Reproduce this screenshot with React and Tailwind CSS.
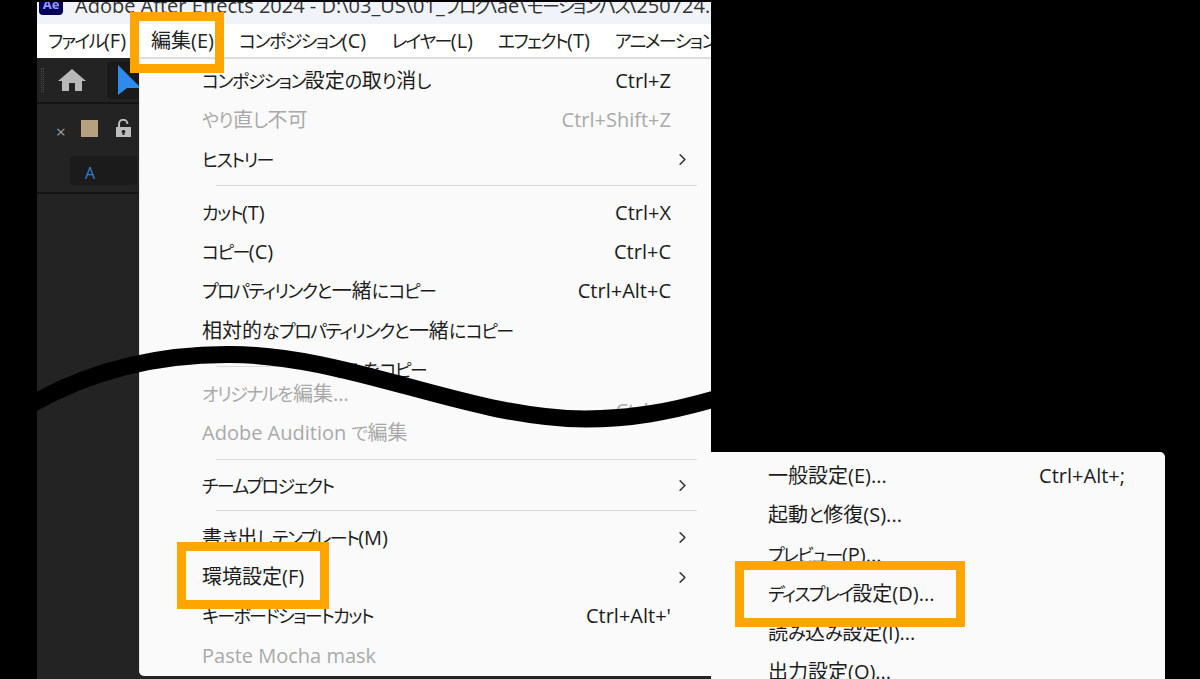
import React from 'react';
import { ChevronRight } from 'lucide-react';

// katakana / hiragana run narrower than kanji in the reference font
const K = ({ children }) => <span className="text-[18px] tracking-[-1.6px]">{children}</span>;
const H = ({ children }) => <span className="text-[18px] tracking-[-0.5px]">{children}</span>;

const Row = ({ label, shortcut, disabled, arrow, labelClass = '', shortcutClass = '' }) => (
    <div className={`flex h-[39.25px] items-center justify-between ${arrow ? 'pr-[19px]' : 'pr-[40px]'} ${disabled ? 'text-[#a9a9a9]' : 'text-[#1c1c1c]'}`}>
        <span className={`whitespace-nowrap ${labelClass}`}>{label}</span>
        {shortcut && <span className={`whitespace-nowrap ${shortcutClass}`}>{shortcut}</span>}
        {arrow && <ChevronRight size={19} strokeWidth={2} className="text-[#333333]" />}
    </div>
);

const Sep = ({ top }) => (
    <div className={`h-[13px] ${top}`}>
        <div className="ml-[14px] mr-[14px] h-[1px] bg-[#dadada]" />
    </div>
);

const Highlight = ({ className }) => (
    <div className={`absolute border-[9px] border-[#ffa500] ${className}`} />
);

const App = () => {
    return (
        <div className="relative flex h-[679px] w-[1200px] overflow-hidden bg-black pl-[37px] pt-[2px] font-['Open_Sans','Noto_Sans_CJK_JP',sans-serif] text-[20px] leading-[26px] [font-feature-settings:'palt']">
            {/* app window */}
            <div className="relative flex w-[674px] flex-col overflow-hidden">
                {/* title bar */}
                <div className="flex h-[22px] shrink-0 items-start gap-[12px] overflow-hidden bg-[#f0f3f9] pl-[2px]">
                    <div className="-mt-[9px] flex h-[22px] w-[24px] shrink-0 items-center justify-center rounded-[4px] bg-[#00005b] text-[13px] font-bold text-[#9999ff]">Ae</div>
                    <span className="-mt-[9px] whitespace-nowrap text-[#333333]">
                        Adobe After Effects 2024 - D:\03_US\01_<K>ブログ</K>\ae\<K>モーションパス</K>\250724.aep
                    </span>
                </div>
                {/* menu bar */}
                <div className="flex h-[34px] shrink-0 items-center gap-[25px] overflow-hidden bg-white pl-[11px] text-[#222222]">
                    <span className="whitespace-nowrap"><K>ファイル</K>(F)</span>
                    <span className="whitespace-nowrap">編集(E)</span>
                    <span className="whitespace-nowrap"><K>コンポジション</K>(C)</span>
                    <span className="whitespace-nowrap"><K>レイヤー</K>(L)</span>
                    <span className="whitespace-nowrap"><K>エフェクト</K>(T)</span>
                    <span className="whitespace-nowrap"><K>アニメーション</K>(A)</span>
                </div>
                {/* dark panels */}
                <div className="flex flex-1 flex-col bg-[#232323]">
                    <div className="flex h-[46px] items-center border-b-2 border-[#141414] pl-[4px]">
                        <div className="h-[24px] w-[3px] border-x border-dotted border-[#4a4a4a]" />
                        <svg width="28" height="22" viewBox="0 0 28 22" className="ml-[14px]">
                            <path d="M14 0 L28 12 L24 12 L24 22 L17 22 L17 14 L11 14 L11 22 L4 22 L4 12 L0 12 Z" fill="#b8b8b8" />
                        </svg>
                        <div className="ml-[21px] flex h-[38px] w-[40px] items-center rounded-[4px] bg-[#1a1a1a] pl-[11px]">
                            <svg width="24" height="30" viewBox="0 0 24 30">
                                <path d="M0 0 L23 23 L9 23 L0 30 Z" fill="#2d8ceb" />
                            </svg>
                        </div>
                    </div>
                    <div className="flex h-[48px] items-center pl-[19px]">
                        <span className="pt-[6px] text-[17px] leading-none text-[#a0a0a0]">×</span>
                        <div className="ml-[15px] h-[17px] w-[17px] bg-[#b5a07f]" />
                        <svg width="15" height="18" viewBox="0 0 15 18" className="ml-[18px]">
                            <path d="M3 9 V5 a4.2 4.2 0 0 1 8.4 0" fill="none" stroke="#bdbdbd" strokeWidth="2" />
                            <path d="M0 8 H15 V18 H0 Z M7.5 11 a1.6 1.6 0 0 0 -1 3 V16 H8.5 V14 a1.6 1.6 0 0 0 -1 -3 Z" fill="#bdbdbd" fillRule="evenodd" />
                        </svg>
                    </div>
                    <div className="h-[42px] border-b-2 border-[#141414] pl-[33px] pt-[4px]">
                        <div className="flex h-[29px] w-[67px] items-center rounded-[3px] bg-[#1b1b1b] pl-[15px] pt-[4px] text-[16px] text-[#2f80d0]">A</div>
                    </div>
                </div>

                {/* edit menu */}
                <div className="absolute left-[102px] top-[55px] h-[619px] w-[572px] rounded-bl-[5px] border-l border-[#e8e8e8] bg-[#fafafa] pt-[4.4px] pl-[62px] [&>*]:-ml-[62px] [&>*]:pl-[62px]">
                    <div className="absolute left-0 top-0 !ml-0 h-[2px] w-full bg-[#dddddd] !pl-0" />
                    <Row label={<><K>コンポジション</K>設定<H>の</H>取<H>り</H>消<H>し</H></>} shortcut="Ctrl+Z" />
                    <Row label={<><H>やり</H>直<H>し</H>不可</>} shortcut="Ctrl+Shift+Z" disabled />
                    <Row label={<K>ヒストリー</K>} arrow />
                    <Sep top="pt-[6px] h-[14px]" />
                    <Row label={<><K>カット</K>(T)</>} shortcut="Ctrl+X" />
                    <Row label={<><K>コピー</K>(C)</>} shortcut="Ctrl+C" />
                    <Row label={<><K>プロパティリンク</K><H>と</H>一緒<H>に</H><K>コピー</K></>} shortcut="Ctrl+Alt+C" />
                    <Row label={<>相対的<H>な</H><K>プロパティリンク</K><H>と</H>一緒<H>に</H><K>コピー</K></>} />
                    <Row label={<><K>エクスプレッション</K><H>のみを</H><K>コピー</K></>} labelClass="[clip-path:inset(0_0_0_133px)]" />
                    {/* the lower half of the torn screenshot starts here */}
                    <div className="-mt-[23.3px] h-[1px] w-[191px] !pl-0">
                        <div className="ml-[76px] h-[1px] w-[177px] bg-[#dadada]" />
                    </div>
                    <div className="h-[7.4px]" />
                    <Row label={<><K>オリジナル</K><H>を</H>編集...</>} shortcut="Ctrl+E" disabled shortcutClass="mt-[34px]" />
                    <Row label={<>Adobe Audition <H>で</H>編集</>} disabled />
                    <Sep top="pt-[6px]" />
                    <Row label={<K>チームプロジェクト</K>} arrow />
                    <Sep top="pt-[5px]" />
                    <Row label={<>書<H>き</H>出<H>し</H><K>テンプレート</K>(M)</>} arrow />
                    <Row label="環境設定(F)" arrow />
                    <Row label={<K>キーボードショートカット</K>} shortcut="Ctrl+Alt+'" />
                    <Row label="Paste Mocha mask" disabled />
                </div>

                {/* tear across the window */}
                <svg width="674" height="100" viewBox="37 340 674 100" className="absolute left-0 top-[338px]">
                    <path d="M30 405 C 100 365, 170 354, 231 354.5 C 350 355, 470 419, 585 419 C 630 419, 670 412, 718 398" fill="none" stroke="#000000" strokeWidth="17" />
                </svg>
            </div>

            {/* preferences submenu */}
            <div className="absolute left-[711px] top-[452px] w-[454px] rounded-tr-[5px] bg-[#fafafa] pt-[4.4px] pl-[57px]">
                <Row label="一般設定(E)..." shortcut="Ctrl+Alt+;" />
                <Row label={<>起動<H>と</H>修復(S)...</>} />
                <Row label={<><K>プレビュー</K>(P)...</>} />
                <Row label={<><K>ディスプレイ</K>設定(D)...</>} />
                <Row label={<>読<H>み</H>込<H>み</H>設定(I)...</>} />
                <Row label="出力設定(O)..." />
            </div>

            {/* orange annotations */}
            <Highlight className="left-[130px] top-[12px] h-[61px] w-[94px]" />
            <Highlight className="left-[177px] top-[542px] h-[67px] w-[152px]" />
            <Highlight className="left-[735px] top-[561px] h-[66px] w-[230px]" />
        </div>
    );
};

export default App;
